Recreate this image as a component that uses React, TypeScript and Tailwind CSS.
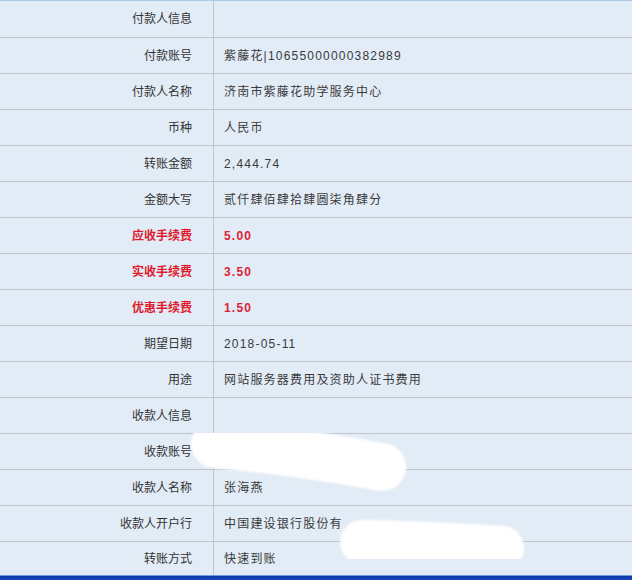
import React from "react";

type Row = { label: string; value?: string; red?: boolean };

const rows: Row[] = [
  { label: "付款人信息" },
  { label: "付款账号", value: "紫藤花|10655000000382989" },
  { label: "付款人名称", value: "济南市紫藤花助学服务中心" },
  { label: "币种", value: "人民币" },
  { label: "转账金额", value: "2,444.74" },
  { label: "金额大写", value: "贰仟肆佰肆拾肆圆柒角肆分" },
  { label: "应收手续费", value: "5.00", red: true },
  { label: "实收手续费", value: "3.50", red: true },
  { label: "优惠手续费", value: "1.50", red: true },
  { label: "期望日期", value: "2018-05-11" },
  { label: "用途", value: "网站服务器费用及资助人证书费用" },
  { label: "收款人信息" },
  { label: "收款账号", value: "" },
  { label: "收款人名称", value: "张海燕" },
  { label: "收款人开户行", value: "中国建设银行股份有" },
  { label: "转账方式", value: "快速到账" },
];

export default function App() {
  return (
    <div
      className="relative w-[632px] h-[580px] overflow-hidden bg-[#e2ecf6]"
      style={{ fontFamily: '"Liberation Sans", "Noto Sans CJK SC", sans-serif' }}
    >
      <div className="h-px bg-[#a9c8ea]" />
      {rows.map((r, i) => {
        const h =
          i === 0 ? "h-[37px] border-b" : i === rows.length - 1 ? "h-[33px]" : "h-[36px] border-b";
        return (
          <div key={i} className={`flex ${h} border-[#c2c4c7]`}>
            <div
              className={`w-[214px] shrink-0 flex items-center justify-end pr-[21px] border-r border-[#c2c4c7] text-[12px] leading-none ${
                r.red ? "text-[#e0182b] font-bold" : "text-[#333333]"
              }`}
            >
              {r.label}
            </div>
            <div
              className={`flex-1 flex items-center pl-[10px] text-[12px] leading-none tracking-[1.2px] ${
                r.red ? "text-[#dc2335] font-bold" : "text-[#3a3a3a]"
              }`}
            >
              {r.value}
            </div>
          </div>
        );
      })}
      <div className="h-px bg-[#6f9be0]" />
      <div className="h-[5px] bg-gradient-to-b from-[#0a36a8] to-[#1d4fbd]" />

      <svg
        className="absolute left-0 top-0 pointer-events-none"
        width="632"
        height="580"
        viewBox="0 0 632 580"
      >
        <defs>
          <filter id="soft" x="-10%" y="-10%" width="120%" height="120%">
            <feGaussianBlur stdDeviation="0.8" />
          </filter>
        </defs>
        <g filter="url(#soft)" stroke="#ffffff" strokeLinecap="round" fill="none">
          <path d="M215 444 Q 300 452 382 467" strokeWidth="48" />
          <path d="M362 542 Q 430 543 502 548" strokeWidth="44" />
        </g>
      </svg>
    </div>
  );
}
